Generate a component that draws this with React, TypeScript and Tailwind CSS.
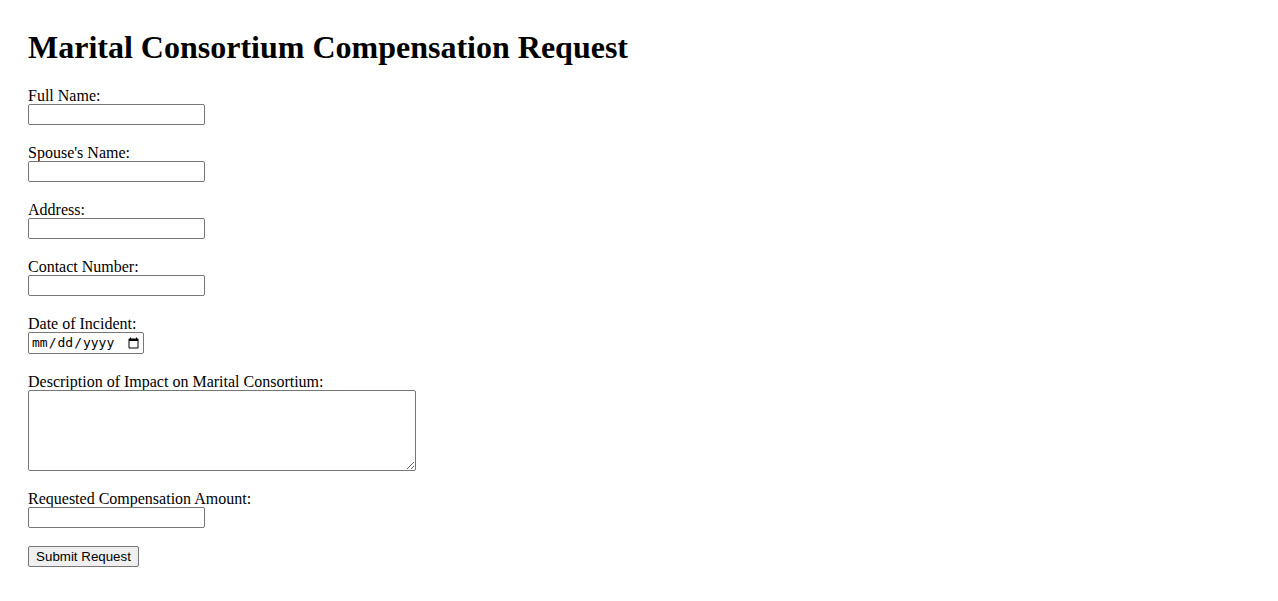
import React from "react";

const serif = { fontFamily: '"Liberation Serif", "Times New Roman", serif' };

function Field({ label, children }: { label: string; children: React.ReactNode }) {
  return (
    <div className="flex flex-col items-start mb-[18px]">
      <label className="block h-[18px] leading-[19px] text-[16px] text-black">{label}</label>
      {children}
    </div>
  );
}

const inputCls =
  "block w-[177px] h-[21px] border border-[#767676] rounded-[2px] bg-white px-[2px] text-[13px] outline-none";

export default function App() {
  return (
    <div className="min-h-screen bg-white pl-[28px] pt-[29px] text-black" style={serif}>
      <h1 className="text-[32px] font-bold leading-[37px] mb-[20px]">
        Marital Consortium Compensation Request
      </h1>
      <form onSubmit={(e) => e.preventDefault()}>
        <Field label="Full Name:">
          <input type="text" className={inputCls} />
        </Field>
        <Field label="Spouse's Name:">
          <input type="text" className={inputCls} />
        </Field>
        <Field label="Address:">
          <input type="text" className={inputCls} />
        </Field>
        <Field label="Contact Number:">
          <input type="text" className={inputCls} />
        </Field>
        <Field label="Date of Incident:">
          <input
            type="date"
            className="block w-[116px] h-[22px] border border-[#767676] rounded-[2px] bg-white pl-[2px] pr-[1px] text-[13px] outline-none"
            style={{ fontFamily: '"DejaVu Sans Mono", "Liberation Mono", monospace' }}
          />
        </Field>
        <Field label="Description of Impact on Marital Consortium:">
          <textarea className="block w-[388px] h-[81px] border border-[#767676] rounded-[2px] bg-white p-[2px] text-[13px] outline-none" />
        </Field>
        <Field label="Requested Compensation Amount:">
          <input type="text" className={inputCls} />
        </Field>
        <button
          type="submit"
          className="block w-[111px] h-[21px] border border-[#767676] rounded-[2px] bg-[#efefef] text-[13.33px] leading-[19px] text-black"
          style={{ fontFamily: '"Liberation Sans", Arial, sans-serif' }}
        >
          Submit Request
        </button>
      </form>
    </div>
  );
}
